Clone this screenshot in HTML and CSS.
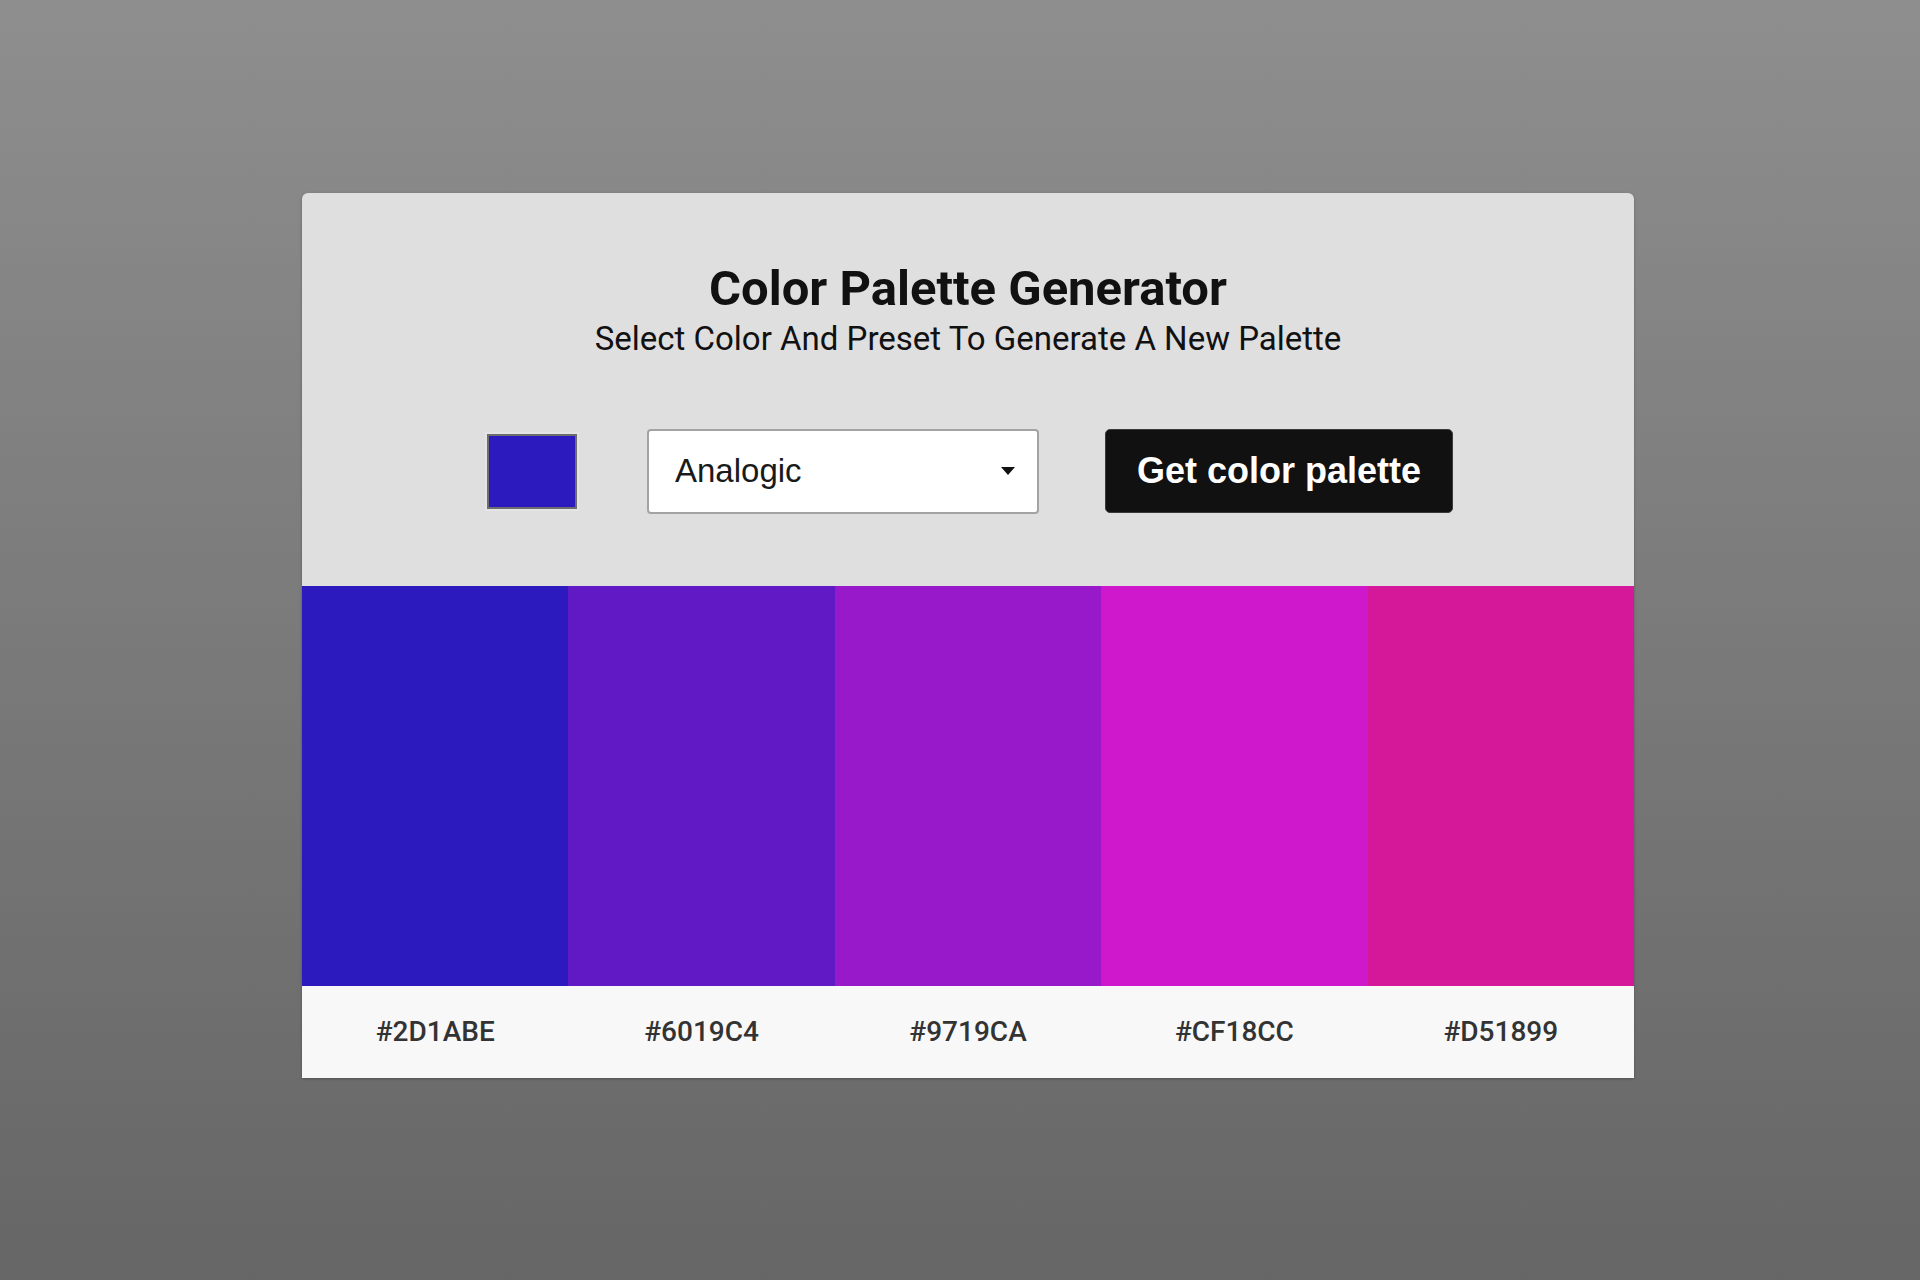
FILE: index.html
```html
<!DOCTYPE html>
<html lang="en">
<head>
<meta charset="utf-8">
<title>Color Palette Generator</title>
<link rel="stylesheet" href="styles.css">
</head>
<body>
<main class="card">
  <header class="card-head">
    <h1 class="title">Color Palette Generator</h1>
    <p class="subtitle">Select Color And Preset To Generate A New Palette</p>
    <div class="controls">
      <div class="picker"><span class="picker-swatch"></span></div>
      <div class="select">
        <span class="select-value">Analogic</span>
        <svg class="select-arrow" width="14" height="8" viewBox="0 0 14 8"><path d="M0 0h14L7 8z" fill="#111"/></svg>
      </div>
      <button class="btn">Get color palette</button>
    </div>
  </header>
  <section class="palette">
    <div class="col"><div class="swatch" style="background:#2D1ABE"></div><div class="hex">#2D1ABE</div></div>
    <div class="col"><div class="swatch" style="background:#6019C4"></div><div class="hex">#6019C4</div></div>
    <div class="col"><div class="swatch" style="background:#9719CA"></div><div class="hex">#9719CA</div></div>
    <div class="col"><div class="swatch" style="background:#CF18CC"></div><div class="hex">#CF18CC</div></div>
    <div class="col"><div class="swatch" style="background:#D51899"></div><div class="hex">#D51899</div></div>
  </section>
</main>
</body>
</html>
```

FILE: styles.css
```css
* { box-sizing: border-box; }
html, body { height: 100%; }
body {
  margin: 0;
  min-height: 100vh;
  background: linear-gradient(to bottom, #8e8e8e 0%, #666666 100%);
  display: flex;
  align-items: center;
  justify-content: center;
  padding: 0 0 10px 16px;
  font-family: Roboto, "Liberation Sans", Arial, sans-serif;
}
.card {
  width: 1332px;
  border-radius: 6px 6px 0 0;
  overflow: hidden;
  box-shadow: 0 1px 3px rgba(0,0,0,0.25);
}
.card-head {
  background: #dfdfdf;
  height: 393px;
  padding-top: 67px;
  display: flex;
  flex-direction: column;
  align-items: center;
}
.title {
  margin: 0;
  font-size: 49px;
  line-height: 57px;
  font-weight: 700;
  color: #111;
}
.subtitle {
  margin: 2px 0 0;
  font-size: 33px;
  line-height: 39px;
  color: #111;
}
.controls {
  margin-top: 71px;
  display: flex;
  align-items: center;
}
.picker {
  width: 94px;
  height: 79px;
  padding: 2px;
  background: #e4e4e4;
  margin-left: 2px;
  margin-right: 68px;
}
.picker-swatch {
  display: block;
  width: 100%;
  height: 100%;
  background: #2D1ABE;
  border: 2px solid #6d6d6d;
}
.select {
  width: 392px;
  height: 85px;
  background: #fff;
  border: 2px solid #a3a3a3;
  border-radius: 4px;
  display: flex;
  align-items: center;
  justify-content: space-between;
  padding: 0 22px 0 26px;
  margin-right: 66px;
}
.select-value {
  font-family: "Liberation Sans", Arial, sans-serif;
  font-size: 33px;
  color: #1a1a1a;
}
.btn {
  width: 348px;
  height: 84px;
  background: #111;
  color: #fff;
  border: 1px solid #3a3a3a;
  border-radius: 5px;
  font-family: "Liberation Sans", Arial, sans-serif;
  font-weight: 700;
  font-size: 36px;
  padding: 0;
}
.palette {
  display: flex;
}
.col {
  flex: 1;
  display: flex;
  flex-direction: column;
}
.swatch {
  height: 400px;
}
.hex {
  height: 92px;
  background: #f8f8f8;
  display: flex;
  align-items: center;
  justify-content: center;
  font-size: 28px;
  font-weight: 500;
  color: #333;
}
```
